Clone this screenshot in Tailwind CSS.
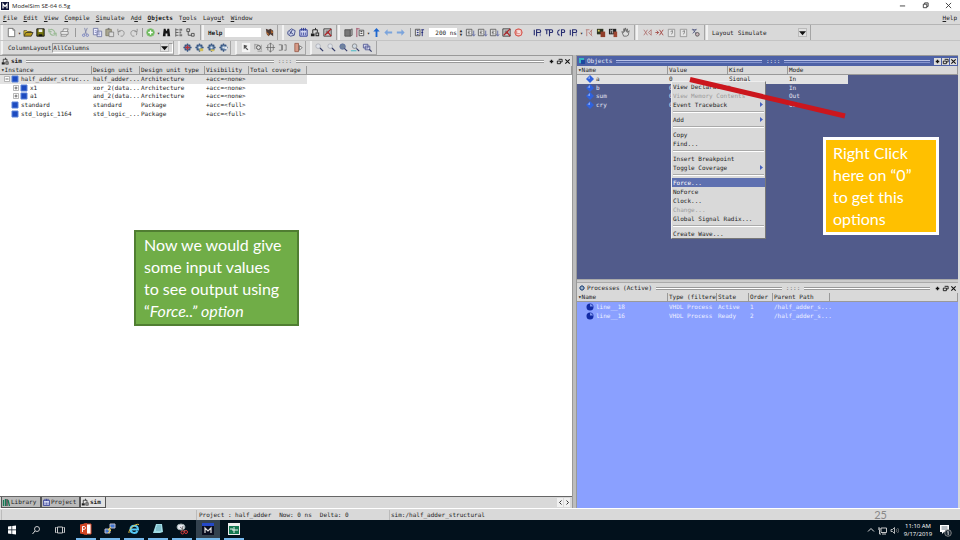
<!DOCTYPE html>
<html lang="en">
<head>
<meta charset="utf-8">
<title>ModelSim SE-64 6.5g</title>
<script src="https://cdn.jsdelivr.net/npm/@tailwindcss/browser@4"></script>
</head>
<body class="relative h-screen overflow-hidden bg-[#d9d9d9] flex flex-col font-['DejaVu_Sans_Mono','Liberation_Mono',monospace] text-[6px] leading-[8px] text-[#222]">

<svg class="hidden" aria-hidden="true">
  <symbol id="new" viewBox="0 0 12 12"><path d="M2.500 1.500h5l2 2v7h-7z" fill="#fff" stroke="#555" stroke-width=".8"/><path d="M7.500 1.500v2h2" fill="none" stroke="#555" stroke-width=".7"/></symbol>
  <symbol id="open" viewBox="0 0 12 12"><path d="M1 9V4h3l1 1h4v2" fill="#e4c93a" stroke="#4b4312" stroke-width=".8"/><path d="M1 10l2-4h8l-2 4z" fill="#b99d1d" stroke="#222" stroke-width=".8"/></symbol>
  <symbol id="save" viewBox="0 0 12 12"><path d="M2 2h8v8H2z" fill="#77760f" stroke="#111"/><path d="M4 2.500h4v3H4z" fill="#eee"/><path d="M4 8h4v2H4z" fill="#111"/></symbol>
  <symbol id="reload" viewBox="0 0 12 12"><path d="M2 4c3-3 6-1 7 3M3 6c1 3 4 4 6 2M2 2v3h3M10 10V7H7" fill="none" stroke="#9dbb98" stroke-width="1.200"/></symbol>
  <symbol id="print" viewBox="0 0 12 12"><path d="M4 5l1-3h5l-1 3M2 5h8v3H2zM3 8l-1 2h6l1-2" fill="#eee" stroke="#777" stroke-width=".8"/></symbol>
  <symbol id="cut" viewBox="0 0 12 12"><path d="M8 1L5 8M5 1l2 7" stroke="#7c83a9" stroke-width=".9"/><circle cx="4" cy="9" r="1.300" fill="none" stroke="#7580c0"/><circle cx="8" cy="9" r="1.300" fill="none" stroke="#7580c0"/></symbol>
  <symbol id="copy" viewBox="0 0 12 12"><path d="M1.500 1.500h5v7h-5zM5.500 4.500h5v6h-5z" fill="#eef" stroke="#6b739f" stroke-width=".9"/><path d="M3 4h2M3 6h2M7 6.500h2M7 8.500h2" stroke="#5f68a8" stroke-width=".7"/></symbol>
  <symbol id="paste" viewBox="0 0 12 12"><path d="M2 2.500h6v7H2z" fill="#a8a58f" stroke="#77735a" stroke-width=".8"/><path d="M4 1h2v2H4z" fill="#777"/><path d="M5.500 5.500h5v5h-5z" fill="#ddd" stroke="#777" stroke-width=".8"/></symbol>
  <symbol id="undo" viewBox="0 0 12 12"><path d="M3 9c-2-4 1-6 4-5 3 1 2 5 0 6H5M2 2v3h3" fill="none" stroke="#888" stroke-width=".9"/></symbol>
  <symbol id="redo" viewBox="0 0 12 12"><path d="M9 9c2-4-1-6-4-5-3 1-2 5 0 6h2M10 2v3H7" fill="none" stroke="#888" stroke-width=".9"/></symbol>
  <symbol id="add" viewBox="0 0 12 12"><circle cx="6" cy="6" r="4.200" fill="#63b752" stroke="#8dbf80"/><path d="M6 3.500v5M3.500 6h5" stroke="#fff" stroke-width="1.500"/></symbol>
  <symbol id="find" viewBox="0 0 12 12"><path d="M2 10l1-8h2l.5 2h1L7 2h2l1 8H7V7H5v3z" fill="#151515"/></symbol>
  <symbol id="tree" viewBox="0 0 12 12"><path d="M3 1.500v9M3 3h3M3 6h3M3 9h3" stroke="#444" fill="none" stroke-width=".8"/><path d="M7 2h3v2H7zM7 5h2v2H7zM7 8h3v2H7z" fill="#777"/></symbol>
  <symbol id="collapse" viewBox="0 0 12 12"><path d="M2 2h3v3H2zM7 7h3v3H7zM3.500 5v4H7" fill="none" stroke="#444" stroke-width=".9"/></symbol>
  <symbol id="book" viewBox="0 0 12 12"><path d="M2 2l3 1 2-1 3 2v6L7 8l-2 2-2-2z" fill="#4c3a35"/><path d="M2 5l3 2v3zM8 3l2 3-2 1z" fill="#c87332"/></symbol>
  <symbol id="compile" viewBox="0 0 12 12"><path d="M2 5l4-3 4 2-1 5-4 1-3-2z" fill="#cdd3e8" stroke="#344082" stroke-width=".9"/><path d="M4 5l4 3M7 3L4 8" stroke="#344082"/></symbol>
  <symbol id="all" viewBox="0 0 12 12"><path d="M2 3h8v7H2zM4 1v3M6 1v3M8 1v3" fill="#d2d7f2" stroke="#293492"/><path d="M4 6v3M6 6v3M8 6v3" stroke="#293492" stroke-width=".8"/></symbol>
  <symbol id="sim" viewBox="0 0 12 12"><path d="M3 7V3h5v3M6 3V1" fill="none" stroke="#222"/><path d="M1 7h4v3H1zM6 6h4v4H6z" fill="#222"/><path d="M7 7h2v2H7z" fill="#ccc"/></symbol>
  <symbol id="stop" viewBox="0 0 12 12"><path d="M2 2h8v8H2z" fill="#ccc" stroke="#333" stroke-width=".9"/><path d="M4 4h4v1H4zM4 6h4v1H4z" fill="#333"/><path d="M3 9l7-7M6 5l4 5" stroke="#b32327" stroke-width="1.300"/></symbol>
  <symbol id="chip" viewBox="0 0 12 12"><path d="M2 3h6v7H2z" fill="#777" stroke="#555"/><path d="M8 3l2-1v7l-2 1z" fill="#aaa" stroke="#444" stroke-width=".7"/></symbol>
  <symbol id="env" viewBox="0 0 12 12"><path d="M4.500 3.500h5v6h-5z" fill="#eee" stroke="#444" stroke-width=".9"/><path d="M2 1v10M2 2h3" stroke="#a04a62" fill="none"/><path d="M6 5h2M6 7h2" stroke="#333"/></symbol>
  <symbol id="up" viewBox="0 0 12 12"><path d="M6 1L2.500 5H5v6h2V5h2.500z" fill="#1f67cf"/></symbol>
  <symbol id="left" viewBox="0 0 12 12"><path d="M1.500 6L5 2.500V5h5v2H5v2.500z" fill="#7ba4dc"/></symbol>
  <symbol id="right" viewBox="0 0 12 12"><path d="M10.500 6L7 2.500V5H2v2h5v2.500z" fill="#7ba4dc"/></symbol>
  <symbol id="restart" viewBox="0 0 12 12"><path d="M1.500 2.500h5v7h-5z" fill="#eee" stroke="#444" stroke-width=".9"/><path d="M3 4h2M3 6h2M3 8h2M9 10V3M8 3h3M8 6h2" stroke="#222a78"/></symbol>
  <symbol id="run" viewBox="0 0 12 12"><path d="M1.500 2.500h6v7h-6z" fill="#eee" stroke="#555" stroke-width=".9"/><path d="M3 4.500h3M3 6h2M3 7.500h3" stroke="#444" stroke-width=".8"/><path d="M9.500 4v5M8 8l1.500 2L11 8" fill="none" stroke="#445199" stroke-width=".8"/></symbol>
  <symbol id="halt" viewBox="0 0 12 12"><circle cx="6" cy="6" r="4" fill="#df8b84" stroke="#d85951"/><path d="M4 4h4v1H5v1h3v2H4" fill="none" stroke="#fff" stroke-width=".8"/></symbol>
  <symbol id="step" viewBox="0 0 12 12"><path d="M2.500 3v6M5 10V3h3c2 0 2 3 0 3H5" fill="none" stroke="#262c70" stroke-width="1.200"/><path d="M9 7v3" stroke="#6a70a0"/></symbol>
  <symbol id="over" viewBox="0 0 12 12"><path d="M1 3h5M3 3v5M6 10V3h2c2 0 2 3 0 3H6" fill="none" stroke="#262c70" stroke-width="1.200"/></symbol>
  <symbol id="out" viewBox="0 0 12 12"><path d="M4 3C1 4 1 8 4 9M6 10V3h2c2 0 2 3 0 3H6" fill="none" stroke="#262c70" stroke-width="1.200"/></symbol>
  <symbol id="trace" viewBox="0 0 12 12"><path d="M2 3h4M3 3v7M6 6l3-3M5 6l4 4M8 3v6" fill="none" stroke="#b5746e" stroke-width=".9"/></symbol>
  <symbol id="profile" viewBox="0 0 12 12"><path d="M1 2h7v6H1z" fill="#2c3420"/><path d="M5 5h5v6H5z" fill="#903c28"/><path d="M2 3h2v2H2z" fill="#d6cf65"/></symbol>
  <symbol id="memory" viewBox="0 0 12 12"><path d="M1 2h8v6H1z" fill="#222"/><path d="M6 5h4v6H6z" fill="#9c4632"/><path d="M3 7V3l1 1 1-1v4" fill="none" stroke="#fff" stroke-width=".7"/></symbol>
  <symbol id="hand" viewBox="0 0 12 12"><path d="M2 5l2 1V2h1v3l1-4 1 4 1-3v4l2-2-1 5-2 1H4z" fill="#ddd" stroke="#555" stroke-width=".8"/></symbol>
  <symbol id="xprev" viewBox="0 0 12 12"><path d="M2 3l4 6M6 3L2 9M10 3L7 6l3 3M10 3v6" fill="none" stroke="#a8625f" stroke-width=".8"/></symbol>
  <symbol id="xnext" viewBox="0 0 12 12"><path d="M6 3l4 6M10 3L6 9M1.500 6H5M3 4l2 2-2 2" fill="none" stroke="#a03b38" stroke-width=".9"/></symbol>
  <symbol id="page" viewBox="0 0 12 12"><path d="M2.500 2.500h7v8h-7z" fill="#e5e5e5" stroke="#888" stroke-width=".8"/><path d="M5 5l2-1v2L6 8" fill="none" stroke="#666" stroke-width=".8"/></symbol>
  <symbol id="xtrace" viewBox="0 0 12 12"><path d="M2 3h5M3 2l4 6M7 2L3 7" stroke="#444c78" stroke-width=".8"/><circle cx="8" cy="8" r="2" fill="#cdb6bc" stroke="#555"/></symbol>
  <symbol id="gear" viewBox="0 0 12 12"><path d="M6 1.500v9M1.500 6h9M3 3l6 6M9 3L3 9" stroke="#3b5b87" stroke-width="1.500"/><circle cx="6" cy="6" r="3" fill="#6688ae" stroke="#304c78"/><circle cx="6" cy="6" r="1.200" fill="#e4e8ef"/></symbol>
  <symbol id="select" viewBox="0 0 12 12"><path d="M1 1h9v10H1z" fill="#f3f3f3"/><path d="M3 3v5l1.500-1.500L7 9l1-1-2.500-2L7 4z" fill="#555"/></symbol>
  <symbol id="zoombox" viewBox="0 0 12 12"><path d="M2 2v6M2 3h4M9 3v6M5 10h5" stroke="#888" fill="none" stroke-width=".8"/><circle cx="6" cy="6" r="2.200" fill="none" stroke="#555"/></symbol>
  <symbol id="move" viewBox="0 0 12 12"><path d="M6 1v10M1 6h10M3 3v6M9 3v6M4 3l2-2 2 2M4 9l2 2 2-2" fill="none" stroke="#666" stroke-width=".8"/></symbol>
  <symbol id="two" viewBox="0 0 12 12"><path d="M2 3h3v6H2M6 3v6M8 3h2v6H8" fill="none" stroke="#777" stroke-width=".9"/></symbol>
  <symbol id="break" viewBox="0 0 12 12"><path d="M2 1.500h4v9H2z" fill="#d79a87" stroke="#985c4a" stroke-width=".9"/><path d="M7 4l3 2-3 3z" fill="#eee" stroke="#555" stroke-width=".8"/></symbol>
  <symbol id="zoom" viewBox="0 0 12 12"><circle cx="4.500" cy="4.500" r="2.500" fill="#dfe3ea" stroke="#a4a6ae" stroke-width=".8"/><path d="M6.500 6.500L10 10" stroke="#343c6a" stroke-width="1.300"/></symbol>
  <symbol id="zoomfull" viewBox="0 0 12 12"><circle cx="5" cy="5" r="3" fill="#6f829d" stroke="#5b6ca0" stroke-width=".8"/><path d="M7 7l3 3" stroke="#343c6a" stroke-width="1.200"/></symbol>
  <symbol id="zoomcur" viewBox="0 0 12 12"><circle cx="5" cy="4.500" r="2.500" fill="#cfd8e2" stroke="#777" stroke-width=".8"/><path d="M7 7l3 3" stroke="#343c6a" stroke-width="1.200"/><path d="M1 9.500h6" stroke="#62bfc9" stroke-width="1.300"/></symbol>
  <symbol id="zoomother" viewBox="0 0 12 12"><path d="M1.500 2.500h5v4h-5zM3.500 4.500h5v4h-5z" fill="#d9dcef" stroke="#4a5190" stroke-width=".9"/><path d="M8 8l2.500 2.500" stroke="#343c6a" stroke-width="1.300"/></symbol>
  <symbol id="diamond" viewBox="0 0 8 8"><path d="M4 0l4 4-4 4-4-4z" fill="#2f62de"/><path d="M4 1L1.500 3.500 4 4z" fill="#86a5f2"/></symbol>
  <symbol id="cube" viewBox="0 0 8 8"><path d="M1 1h6v6H1z" fill="#1c4bc0" stroke="#5b83d8"/></symbol>
  <symbol id="ball" viewBox="0 0 8 8"><circle cx="4" cy="4" r="3.500" fill="#122aa5"/><path d="M4 3.500V1A3 3 0 0 1 7 3.500z" fill="#7f96f0"/></symbol>
  <symbol id="plus" viewBox="0 0 8 8"><path d="M1.500 1.500h5v5h-5z" fill="#fff" stroke="#999" stroke-width=".7"/><path d="M2.500 4h3M4 2.500v3" stroke="#333" stroke-width=".7"/></symbol>
  <symbol id="minus" viewBox="0 0 8 8"><path d="M1.500 1.500h5v5h-5z" fill="#fff" stroke="#999" stroke-width=".7"/><path d="M2.500 4h3" stroke="#333" stroke-width=".7"/></symbol>
  <symbol id="dock" viewBox="0 0 8 8"><path d="M4 2v4M2 4h4" stroke="#111" stroke-width="1.500"/></symbol>
  <symbol id="float" viewBox="0 0 8 8"><path d="M3 1.500h4v3H5M1.500 3.500H5v3H1.500z" fill="none" stroke="#111"/></symbol>
  <symbol id="close" viewBox="0 0 8 8"><path d="M1.500 1.500l5 5M6.500 1.500l-5 5" stroke="#111" stroke-width="1.200"/></symbol>
  <symbol id="caret" viewBox="0 0 8 8"><path d="M0 2h8L4 6.500z" fill="#111"/></symbol>
</svg>

<!-- Window caption -->
<header class="h-[11px] shrink-0 bg-white flex items-center pl-px pr-2 font-['Open_Sans',sans-serif]">
  <svg class="size-2" viewBox="0 0 8 8" aria-hidden="true"><path d="M0 0h8v8H0z" fill="#0d1236"/><path d="M2 6.500V2l2 2.500L6 2v4.500" fill="none" stroke="#fff" stroke-width="1.200"/></svg>
  <h1 class="ml-[3px] text-[6px]">ModelSim SE-64 6.5g</h1>
  <div class="ml-auto flex gap-4 [&_svg]:size-[7px] [&_svg]:block">
    <button aria-label="Minimize"><svg viewBox="0 0 8 8"><path d="M1 4.500h6" stroke="#333"/></svg></button>
    <button aria-label="Restore"><svg viewBox="0 0 8 8"><path d="M1.500 2.500h4v4h-4zM3 2.500v-1.500h4v4H5.500" fill="none" stroke="#333"/></svg></button>
    <button aria-label="Close"><svg viewBox="0 0 8 8"><path d="M1 1l6 6M7 1L1 7" stroke="#333"/></svg></button>
  </div>
</header>

<!-- Menus -->
<nav class="h-[14px] shrink-0 flex items-center gap-[6px] pl-[3px] pr-[3px] border-b border-[#b5b5b5] [&_u]:underline-offset-1">
  <button><u>F</u>ile</button><button><u>E</u>dit</button><button><u>V</u>iew</button><button><u>C</u>ompile</button><button><u>S</u>imulate</button><button>A<u>d</u>d</button><button class="font-bold"><u>O</u>bjects</button><button>T<u>o</u>ols</button><button>Layo<u>u</u>t</button><button><u>W</u>indow</button><button class="ml-auto"><u>H</u>elp</button>
</nav>

<!-- First toolbar row -->
<div class="h-[15px] shrink-0 flex items-stretch gap-px pl-px [&>div]:flex [&>div]:items-center [&>div]:border-l-2 [&>div]:border-r [&>div]:border-l-[#f2f2f2] [&>div]:border-r-[#a5a5a5] [&_button]:w-3 [&_button]:shrink-0 [&_svg]:block [&_svg]:size-[11px] [&_i]:block [&_i]:h-[9px] [&_i]:w-px [&_i]:bg-[#999]">
  <div class="w-[200px] pl-[3px]">
    <button aria-label="New"><svg><use href="#new"/></svg></button><span class="w-[5px] text-[5px]">▾</span>
    <button aria-label="Open"><svg><use href="#open"/></svg></button><button aria-label="Save"><svg><use href="#save"/></svg></button><button aria-label="Reload"><svg><use href="#reload"/></svg></button><button aria-label="Print"><svg><use href="#print"/></svg></button>
    <i class="mx-1"></i>
    <button aria-label="Cut"><svg><use href="#cut"/></svg></button><button aria-label="Copy"><svg><use href="#copy"/></svg></button><button aria-label="Paste"><svg><use href="#paste"/></svg></button><button aria-label="Undo"><svg><use href="#undo"/></svg></button><button aria-label="Redo"><svg><use href="#redo"/></svg></button>
    <i class="mx-[2px]"></i>
    <button aria-label="Add"><svg><use href="#add"/></svg></button><span class="w-1 text-[5px]">▾</span>
    <button aria-label="Find"><svg><use href="#find"/></svg></button><button aria-label="Expand"><svg><use href="#tree"/></svg></button><button aria-label="Collapse"><svg><use href="#collapse"/></svg></button>
  </div>
  <div class="w-[76px] pl-1">
    <label for="help" class="font-bold">Help</label><input id="help" class="ml-[3px] h-[9px] w-9 bg-white outline-none">
    <button class="ml-[3px]" aria-label="Search help"><svg><use href="#book"/></svg></button>
  </div>
  <div class="ml-[3px] w-[55px] pl-[2px]">
    <button aria-label="Compile"><svg><use href="#compile"/></svg></button><button aria-label="Compile all"><svg><use href="#all"/></svg></button><button aria-label="Simulate"><svg><use href="#sim"/></svg></button><button aria-label="End simulation"><svg><use href="#stop"/></svg></button>
  </div>
  <div class="w-[297px] pl-[3px]">
    <button aria-label="Memory"><svg><use href="#chip"/></svg></button><button aria-label="Environment"><svg><use href="#env"/></svg></button><span class="w-1 text-[5px]">▾</span>
    <button aria-label="Up"><svg><use href="#up"/></svg></button><button aria-label="Back"><svg><use href="#left"/></svg></button><button aria-label="Forward"><svg><use href="#right"/></svg></button>
    <i class="mx-[3px]"></i>
    <button aria-label="Restart"><svg><use href="#restart"/></svg></button>
    <input aria-label="Run length" value="200 ns" class="ml-[3px] h-[9px] w-7 bg-white text-right outline-none">
    <span class="flex w-2 flex-col items-center text-[4px] leading-[4px]"><span>▲</span><span>▼</span></span>
    <button aria-label="Run"><svg><use href="#run"/></svg></button><button aria-label="Continue run"><svg><use href="#run"/></svg></button><button aria-label="Run all"><svg><use href="#run"/></svg></button><button aria-label="Break"><svg><use href="#stop"/></svg></button><button aria-label="Stop"><svg><use href="#halt"/></svg></button>
    <button class="ml-[7px]" aria-label="Step"><svg><use href="#step"/></svg></button><button aria-label="Step over"><svg><use href="#over"/></svg></button><button aria-label="Step out"><svg><use href="#out"/></svg></button><button aria-label="Step current"><svg><use href="#step"/></svg></button><span class="w-1 text-[5px]">▾</span>
    <button aria-label="Trace"><svg><use href="#trace"/></svg></button><button aria-label="Profile"><svg><use href="#profile"/></svg></button><button aria-label="Memory profile"><svg><use href="#memory"/></svg></button><button aria-label="Pan"><svg><use href="#hand"/></svg></button>
  </div>
  <div class="w-[69px] pl-1">
    <button aria-label="Previous X"><svg><use href="#xprev"/></svg></button><button aria-label="Next X"><svg><use href="#xnext"/></svg></button><button aria-label="Show page"><svg><use href="#page"/></svg></button><button aria-label="Query"><svg><use href="#page"/></svg></button><button aria-label="Trace X"><svg><use href="#xtrace"/></svg></button>
  </div>
  <div class="relative w-[105px] pl-1">
    <label for="layout">Layout</label>
    <select id="layout" class="ml-1 w-[72px] appearance-none bg-transparent outline-none"><option>Simulate</option></select>
    <span class="pointer-events-none absolute right-[3px] flex size-[9px] items-center justify-center border border-[#bbb] bg-[#e0e0e0]"><svg class="size-2!"><use href="#caret"/></svg></span>
  </div>
</div>

<!-- Second toolbar row -->
<div class="h-[15px] shrink-0 flex items-stretch gap-1 border-t border-[#c4c4c4] pl-px [&>div]:flex [&>div]:items-center [&>div]:border-l-2 [&>div]:border-r [&>div]:border-b [&>div]:border-b-[#aaa] [&>div]:border-l-[#f2f2f2] [&>div]:border-r-[#a5a5a5] [&_button]:w-3 [&_button]:shrink-0 [&_svg]:block [&_svg]:size-[11px]">
  <div class="relative w-[173px] pl-[5px]">
    <label for="cols">ColumnLayout</label>
    <select id="cols" class="ml-px h-[10px] flex-1 appearance-none border border-[#999] border-r-white border-b-white bg-transparent outline-none"><option>AllColumns</option></select>
    <span class="pointer-events-none absolute right-[4px] flex size-[9px] items-center justify-center border border-[#bbb] bg-[#e0e0e0]"><svg class="size-2!"><use href="#caret"/></svg></span>
  </div>
  <div class="w-[53px] pl-[2px]">
    <button aria-label="Coverage"><svg viewBox="0 0 12 12"><use href="#gear"/><path d="M6 3.500v5M3.500 6h5" stroke="#b8333a" stroke-width="1.500"/></svg></button><button aria-label="Filter coverage"><svg viewBox="0 0 12 12"><use href="#gear"/><path d="M6 7h4v3H6z" fill="#d3bf57"/></svg></button><button aria-label="Exclude"><svg viewBox="0 0 12 12"><use href="#gear"/><path d="M5 8h4v2H5z" fill="#d3bf57"/></svg></button><button aria-label="Refresh coverage"><svg viewBox="0 0 12 12"><use href="#gear"/><path d="M7 5h3v3H7z" fill="#dfe6ee"/></svg></button>
  </div>
  <div class="w-[71px] pl-1">
    <button aria-label="Select mode"><svg><use href="#select"/></svg></button><button aria-label="Zoom mode"><svg><use href="#zoombox"/></svg></button><button aria-label="Pan mode"><svg><use href="#move"/></svg></button><button aria-label="Edit mode"><svg><use href="#two"/></svg></button>
    <span class="mx-[2px] h-[9px] w-px bg-[#999]"></span>
    <button aria-label="Stop drawing"><svg><use href="#break"/></svg></button>
  </div>
  <div class="w-[67px] pl-[2px]">
    <button aria-label="Zoom in"><svg><use href="#zoom"/></svg></button><button aria-label="Zoom out"><svg><use href="#zoom"/></svg></button><button aria-label="Zoom full"><svg><use href="#zoomfull"/></svg></button><button aria-label="Zoom cursor"><svg><use href="#zoomcur"/></svg></button><button aria-label="Zoom other"><svg><use href="#zoomother"/></svg></button>
  </div>
</div>

<!-- Workspace -->
<main class="flex min-h-0 flex-1 pr-[2px] [&_th]:border-r [&_th]:border-b [&_th]:border-[#999] [&_th]:bg-[#d9d9d9] [&_th]:p-0 [&_th]:pl-px [&_th]:text-left [&_th]:font-normal [&_th]:leading-[8px] [&_td]:p-0 [&_td]:pl-px [&_td]:leading-[8px] [&_table]:w-full [&_table]:table-fixed [&_table]:border-separate [&_table]:border-spacing-0 [&_th]:whitespace-nowrap [&_th]:overflow-hidden [&_td]:whitespace-nowrap">
  <section class="flex min-w-0 flex-[572] flex-col border-t border-[#999]">
    <div class="flex h-[10px] shrink-0 items-center bg-[#d9d9d9]">
      <svg class="ml-px size-[9px]" aria-hidden="true"><use href="#sim"/></svg>
      <h2 class="ml-px font-bold">sim</h2>
      <span class="mx-1 h-[3px] flex-1 border-y border-t-[#999] border-b-[#999] bg-white"></span>
      <span class="text-[#777]">::::</span>
      <span class="mx-1 h-[3px] flex-1 border-y border-t-[#999] border-b-[#999] bg-white"></span>
      <div class="flex gap-px pr-px [&_svg]:block [&_svg]:size-[7px]"><button aria-label="Maximize sim"><svg><use href="#dock"/></svg></button><button aria-label="Undock sim"><svg><use href="#float"/></svg></button><button aria-label="Close sim"><svg><use href="#close"/></svg></button></div>
    </div>
    <div class="min-h-0 flex-1 border-b border-[#666] bg-white">
      <table>
        <colgroup><col class="w-[92px]"><col class="w-[48px]"><col class="w-[65px]"><col class="w-[44px]"><col class="w-[58px]"><col></colgroup>
        <thead><tr><th>▾Instance</th><th>Design unit</th><th>Design unit type</th><th>Visibility</th><th>Total coverage</th><th></th></tr></thead>
      </table>
      <table class="h-[43px] [&_svg]:size-2 [&_svg]:shrink-0">
        <colgroup><col class="w-[92px]"><col class="w-[48px]"><col class="w-[65px]"><col class="w-[44px]"><col class="w-[58px]"><col></colgroup>
        <tbody>
          <tr class="[&_td]:bg-[#e2e2e2]"><td><div class="flex items-center pl-[2px]"><svg><use href="#minus"/></svg><svg><use href="#cube"/></svg><span class="ml-[2px]">half_adder_struc...</span></div></td><td>half_adder...</td><td>Architecture</td><td>+acc=&lt;none&gt;</td><td></td></tr>
          <tr><td><div class="flex items-center pl-[11px]"><svg><use href="#plus"/></svg><svg><use href="#cube"/></svg><span class="ml-[2px]">x1</span></div></td><td>xor_2(data...</td><td>Architecture</td><td>+acc=&lt;none&gt;</td><td></td></tr>
          <tr><td><div class="flex items-center pl-[11px]"><svg><use href="#plus"/></svg><svg><use href="#cube"/></svg><span class="ml-[2px]">a1</span></div></td><td>and_2(data...</td><td>Architecture</td><td>+acc=&lt;none&gt;</td><td></td></tr>
          <tr><td><div class="flex items-center pl-[10px]"><svg><use href="#cube"/></svg><span class="ml-[2px]">standard</span></div></td><td>standard</td><td>Package</td><td>+acc=&lt;full&gt;</td><td></td></tr>
          <tr><td><div class="flex items-center pl-[10px]"><svg><use href="#cube"/></svg><span class="ml-[2px]">std_logic_1164</span></div></td><td>std_logic_...</td><td>Package</td><td>+acc=&lt;full&gt;</td><td></td></tr>
        </tbody>
      </table>
    </div>
    <div class="flex h-[11px] shrink-0 items-stretch pl-px [&_svg]:size-[9px] [&_button]:flex [&_button]:items-center [&_button]:border [&_button]:border-t-0 [&_button]:border-[#555]">
      <button class="w-10 bg-[#bbb]"><svg viewBox="0 0 9 9"><path d="M1.500 2v6M3.500 1v7M6 2l1.500 6" stroke="#157a55" stroke-width="1.300"/><path d="M5 1v7" stroke="#222"/></svg>Library</button>
      <button class="w-[39px] bg-[#bbb]"><svg><use href="#all"/></svg>Project</button>
      <button class="w-[26px] bg-[#e2e2e2] font-bold"><svg><use href="#sim"/></svg>sim</button>
      <div class="ml-auto flex gap-px py-px pr-[2px] [&_button]:w-[6px] [&_button]:justify-center [&_button]:border-0! [&_button]:bg-[#f0f0f0] [&_svg]:size-[5px]!"><button aria-label="Scroll tabs left"><svg viewBox="0 0 5 5"><path d="M3.500.5l-2 2 2 2" fill="none" stroke="#333"/></svg></button><button aria-label="Scroll tabs right"><svg viewBox="0 0 5 5"><path d="M1.500.5l2 2-2 2" fill="none" stroke="#333"/></svg></button></div>
    </div>
  </section>

  <div class="w-[5px] shrink-0 border-x border-x-[#999] bg-[#bdbdbd]"></div>

  <div class="flex min-w-0 flex-[381] flex-col">
    <section class="flex min-h-0 flex-[223] flex-col border-t border-[#999] bg-[#515b8b] text-[#e3e6f4]">
      <div class="flex h-[10px] shrink-0 items-center bg-[#4d61a6]">
        <svg class="ml-px size-2" viewBox="0 0 8 8" aria-hidden="true"><path d="M1 1h5v5H1z" fill="#36b7c4"/><path d="M3 3h4v4H3z" fill="#1c489f"/></svg>
        <h2 class="ml-px">Objects</h2>
        <span class="mx-1 h-[3px] flex-1 border-y border-t-[#b6c0e8] border-b-[#8494cf]"></span><span>::::</span><span class="mx-1 h-[3px] flex-1 border-y border-t-[#b6c0e8] border-b-[#8494cf]"></span>
        <div class="flex gap-px pr-px [&_button]:bg-[#ddd] [&_svg]:block [&_svg]:size-[7px]"><button aria-label="Maximize Objects"><svg><use href="#dock"/></svg></button><button aria-label="Undock Objects"><svg><use href="#float"/></svg></button><button aria-label="Close Objects"><svg><use href="#close"/></svg></button></div>
      </div>
      <table class="text-[#222]">
        <colgroup><col class="w-[91px]"><col class="w-[60px]"><col class="w-[60px]"><col class="w-[60px]"><col></colgroup>
        <thead><tr><th>▾Name</th><th>Value</th><th>Kind</th><th class="border-r-0!">Mode</th><th></th></tr></thead>
      </table>
      <table class="h-[34px] shrink-0 [&_svg]:size-2">
        <colgroup><col class="w-[91px]"><col class="w-[60px]"><col class="w-[60px]"><col class="w-[60px]"><col></colgroup>
        <tbody>
          <tr class="text-[#222] [&_td]:bg-[#e2e2e2]"><td><div class="flex items-center gap-[2px] pl-2"><svg><use href="#diamond"/></svg>a</div></td><td>0</td><td>Signal</td><td>In</td></tr>
          <tr><td><div class="flex items-center gap-[2px] pl-2"><svg><use href="#diamond"/></svg>b</div></td><td>0</td><td>Signal</td><td>In</td></tr>
          <tr><td><div class="flex items-center gap-[2px] pl-2"><svg><use href="#diamond"/></svg>sum</div></td><td>0</td><td>Signal</td><td>Out</td></tr>
          <tr><td><div class="flex items-center gap-[2px] pl-2"><svg><use href="#diamond"/></svg>cry</div></td><td>0</td><td>Signal</td><td>Out</td></tr>
        </tbody>
      </table>
    </section>
    <div class="h-[4px] shrink-0 border-y border-y-[#aaa] bg-[#ccc]"></div>
    <section class="flex min-h-0 flex-[225] flex-col bg-[#8aa0ff] text-[#eef1ff]">
      <div class="flex h-[10px] shrink-0 items-center bg-[#d9d9d9] text-[#222]">
        <svg class="ml-px size-2" viewBox="0 0 12 12" aria-hidden="true"><use href="#gear"/></svg>
        <h2 class="ml-px">Processes (Active)</h2>
        <span class="mx-1 h-[3px] flex-1 border-y border-t-[#999] border-b-[#999] bg-white"></span><span class="text-[#777]">::::</span><span class="mx-1 h-[3px] flex-1 border-y border-t-[#999] border-b-[#999] bg-white"></span>
        <div class="flex gap-px pr-px [&_svg]:block [&_svg]:size-[7px]"><button aria-label="Maximize Processes"><svg><use href="#dock"/></svg></button><button aria-label="Undock Processes"><svg><use href="#float"/></svg></button><button aria-label="Close Processes"><svg><use href="#close"/></svg></button></div>
      </div>
      <table class="text-[#222]">
        <colgroup><col class="w-[91px]"><col class="w-[49px]"><col class="w-[32px]"><col class="w-[24px]"><col class="w-[57px]"><col></colgroup>
        <thead><tr><th>▾Name</th><th>Type (filtere</th><th>State</th><th>Order</th><th>Parent Path</th><th></th></tr></thead>
      </table>
      <table class="h-[18px] shrink-0 [&_svg]:size-2">
        <colgroup><col class="w-[91px]"><col class="w-[49px]"><col class="w-[32px]"><col class="w-[24px]"><col class="w-[57px]"><col></colgroup>
        <tbody>
          <tr><td><div class="flex items-center gap-[2px] pl-2"><svg><use href="#ball"/></svg>line__18</div></td><td>VHDL Process</td><td>Active</td><td>1</td><td>/half_adder_s...</td></tr>
          <tr><td><div class="flex items-center gap-[2px] pl-2"><svg><use href="#ball"/></svg>line__16</div></td><td>VHDL Process</td><td>Ready</td><td>2</td><td>/half_adder_s...</td></tr>
        </tbody>
      </table>
    </section>
  </div>
</main>

<!-- Status line -->
<footer class="flex h-3 shrink-0 items-center border-t border-white pl-px pr-[3px] [&>p]:border-l [&>p]:border-[#bbb] [&>p]:h-[10px] [&>p]:leading-[10px]">
  <p class="w-[195px]"></p>
  <p class="flex w-[193px] gap-2 pl-[2px]"><span>Project : half_adder</span><span>Now: 0 ns</span><span>Delta: 0</span></p>
  <p class="flex-1 pl-px">sim:/half_adder_structural</p>
  <span class="mr-[70px] font-['Lato',sans-serif] text-[11px] text-[#888]">25</span>
</footer>

<!-- Taskbar -->
<nav class="flex h-5 shrink-0 items-stretch bg-[#02111c] text-white">
  <div class="flex w-[74px] items-center justify-between pl-[7px] pr-[9px] [&_svg]:block [&_svg]:size-[10px]">
    <button aria-label="Start"><svg viewBox="0 0 10 10"><path d="M1 1.500l3.500-.5v3.600H1zM5.200 1L9 .5v4.100H5.200zM1 5.300h3.500V9L1 8.500zM5.200 5.300H9v4.200L5.200 9z" fill="#fff"/></svg></button>
    <button aria-label="Search"><svg viewBox="0 0 10 10"><circle cx="6" cy="4" r="2.500" fill="none" stroke="#ddd" stroke-width=".9"/><path d="M4 6L1.500 9" stroke="#ddd"/></svg></button>
    <button aria-label="Task view"><svg viewBox="0 0 10 10"><path d="M2.500 2h5v6h-5zM1.500 2.500h-1v5h1M8.500 2.500h1v5h-1" fill="none" stroke="#ddd" stroke-width=".9"/></svg></button>
  </div>
  <div class="flex flex-1 gap-[4px] pl-[2px] [&>button]:flex [&>button]:w-[20px] [&>button]:items-center [&>button]:justify-center [&>button]:border-b-2 [&>button]:border-[#76b9ed] [&_svg]:size-3">
    <button aria-label="PowerPoint"><svg viewBox="0 0 12 12"><path d="M4 1h7v10H4z" fill="#fff" stroke="#d24726"/><path d="M0 1.500L7 0v12L0 10.500z" fill="#d24726"/><path d="M2.500 9V3.500h1.500c2 0 2 2.800 0 2.800H2.500" fill="none" stroke="#fff"/></svg></button>
    <button aria-label="Remote terminal"><svg viewBox="0 0 12 12"><path d="M6 1h5v4H6zM1 6h5v4H1z" fill="#4376cf" stroke="#bbc"/><path d="M7 4L4 7h3L4 10" fill="none" stroke="#f0d24a"/></svg></button>
    <button aria-label="Internet Explorer"><svg viewBox="0 0 12 12"><path d="M2.500 6.500h7.500c0-5-7.500-5-7.500 0 0 4 5.500 4.500 7 1.500" fill="none" stroke="#55c7f4" stroke-width="2"/><path d="M1 10C0 7 7 0 11 1.500" fill="none" stroke="#f4cf43" stroke-width=".9"/></svg></button>
    <button aria-label="Notepad"><svg viewBox="0 0 12 12"><path d="M4 1h6l1 8-3 1H1z" fill="#9fdbe4"/><path d="M5 3h4M4 5h5M4 7h5" stroke="#4c91a5" stroke-width=".7"/></svg></button>
    <button aria-label="Snipping Tool"><svg viewBox="0 0 12 12"><ellipse cx="5" cy="4" rx="4" ry="3" fill="#e7e9f2" stroke="#9aa"/><path d="M4 4l5 4M7 3L6 8" stroke="#777"/><circle cx="10" cy="9" r="1.500" fill="none" stroke="#d43b3b"/><circle cx="6.500" cy="9.500" r="1.500" fill="none" stroke="#d43b3b"/></svg></button>
    <button aria-label="ModelSim" class="w-6! bg-[#33424f]"><svg viewBox="0 0 12 12"><path d="M0 0h12v12H0z" fill="#0b0e20"/><path d="M0 0h12v3H0z" fill="#2448c8"/><path d="M3 10V5l3 3 3-3v5" fill="none" stroke="#ddd" stroke-width="1.200"/></svg></button>
    <button aria-label="Waveform"><svg viewBox="0 0 12 12"><path d="M0 0h12v12H0z" fill="#eee"/><path d="M1 3h10v8H1z" fill="#147851"/><path d="M2 6h3v2M6 4v6M6 7h4" fill="none" stroke="#fff" stroke-width=".9"/></svg></button>
  </div>
  <div class="flex items-center gap-[3px] pr-[8px] font-['Open_Sans',sans-serif] [&_svg]:block">
    <button aria-label="Hidden icons"><svg class="size-2" viewBox="0 0 8 8"><path d="M1 5.500l3-3 3 3" fill="none" stroke="#ddd"/></svg></button>
    <button aria-label="Network"><svg class="size-[9px]" viewBox="0 0 9 9"><path d="M3 2h5.500v4.500H3zM1 1v3M.5 3h2M4 8h4M1.500 4v4H3" fill="none" stroke="#ddd" stroke-width=".9"/></svg></button>
    <button aria-label="Volume"><svg class="size-[9px]" viewBox="0 0 9 9"><path d="M1 3.500h1.500L4.500 1.500v6L2.500 5.500H1z" fill="none" stroke="#ddd" stroke-width=".8"/><path d="M6 3c1 1 1 2 0 3M7.500 2c1.500 1.500 1.500 3.500 0 5" fill="none" stroke="#888" stroke-width=".8"/></svg></button>
    <p class="w-8 text-center text-[6px] leading-[8px]">11:10 AM<br>9/17/2019</p>
    <button class="ml-[2px]" aria-label="1 notification"><svg class="size-[13px]" viewBox="0 0 13 13"><path d="M1 1h9v7H5L3 10V8H1z" fill="#fff"/><path d="M2.500 3h6M2.500 5h6" stroke="#456" stroke-width=".8"/><circle cx="9" cy="9" r="3.300" fill="#17242f" stroke="#999" stroke-width=".8"/><path d="M8.300 8l.9-.7V11" fill="none" stroke="#fff" stroke-width=".8"/></svg></button>
  </div>
</nav>

<!-- Context menu over the Objects list -->
<div role="menu" class="absolute left-[671px] top-[81px] flex w-[95px] flex-col border border-[#eee] border-r-[#777] border-b-[#777] bg-[#d9d9d9] text-[#222] [&>button]:flex [&>button]:h-[9px] [&>button]:items-center [&>button]:whitespace-nowrap [&>button]:pl-px [&>button]:text-left [&>hr]:mx-px [&>hr]:my-[2px] [&>hr]:h-[2px] [&>hr]:border-t-[#aaa] [&>hr]:border-b [&>hr]:border-b-white [&_svg]:ml-auto [&_svg]:mr-[2px] [&_svg]:h-[5px] [&_svg]:w-[3px] [&_svg]:fill-[#4662c0]">
  <button role="menuitem">View Declaration</button>
  <button role="menuitem" class="text-[#999]">View Memory Contents</button>
  <button role="menuitem">Event Traceback<svg viewBox="0 0 3 5"><path d="M0 0l3 2.500L0 5z"/></svg></button>
  <hr>
  <button role="menuitem">Add<svg viewBox="0 0 3 5"><path d="M0 0l3 2.500L0 5z"/></svg></button>
  <hr>
  <button role="menuitem">Copy</button>
  <button role="menuitem">Find...</button>
  <hr>
  <button role="menuitem">Insert Breakpoint</button>
  <button role="menuitem">Toggle Coverage<svg viewBox="0 0 3 5"><path d="M0 0l3 2.500L0 5z"/></svg></button>
  <hr>
  <button role="menuitem" class="bg-[#5e70b0] text-white">Force...</button>
  <button role="menuitem">NoForce</button>
  <button role="menuitem">Clock...</button>
  <button role="menuitem" class="text-[#999]">Change...</button>
  <button role="menuitem">Global Signal Radix...</button>
  <hr>
  <button role="menuitem">Create Wave...</button>
</div>

<!-- Slide annotations -->
<svg class="pointer-events-none absolute left-[686px] top-[74px] h-[48px] w-[162px]" viewBox="0 0 162 48" aria-hidden="true"><path d="M4 5.500L159 42" stroke="#cb161d" stroke-width="5"/></svg>
<aside class="absolute left-[134px] top-[230px] w-[165px] border-2 border-[#507e32] bg-[#70ad47] px-2 py-[2px] font-['Lato',sans-serif] text-[16px] leading-[22px] text-white">Now we would give<br>some input values<br>to see output using<br>“<em>Force..” option</em></aside>
<aside class="absolute left-[823px] top-[137px] w-[116px] border-3 border-white bg-[#ffc000] px-[7px] py-[2px] font-['Lato',sans-serif] text-[16px] leading-[22px] text-white">Right Click<br>here on “0”<br>to get this<br>options</aside>
</body>
</html>
